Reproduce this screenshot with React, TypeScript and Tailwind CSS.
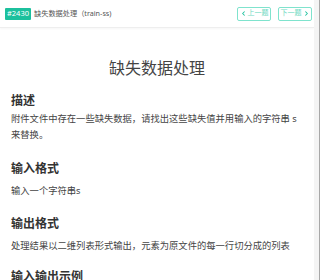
import { ChevronLeft, ChevronRight } from "lucide-react";

const font = { fontFamily: '"Noto Sans", "Noto Sans CJK SC", sans-serif' };

export default function App() {
  return (
    <div className="flex h-[280px] w-[320px] overflow-hidden bg-white" style={font}>
      <div className="flex min-w-0 flex-1 flex-col">
        {/* Header */}
        <div className="flex h-[28px] shrink-0 items-center justify-between border-b border-[#eeeeee] pl-[5px] pr-[2px] shadow-[0_1px_2px_rgba(0,0,0,0.04)]">
          <div className="flex items-center gap-[3px]">
            <span className="flex h-[12px] w-[26px] items-center justify-center rounded-[1px] bg-[#1cc09d] text-[7.5px] text-white">#2430</span>
            <span className="text-[7.2px] text-[#555]">缺失数据处理（train-ss)</span>
          </div>
          <div className="flex items-center gap-[7px]">
            <button className="flex h-[14px] w-[34px] items-center justify-center gap-[1px] rounded-[2px] border border-[#7fe3cd] text-[7px] text-[#6fd9c2]">
              <ChevronLeft className="h-[7px] w-[7px] text-[#1cc09d]" strokeWidth={3.5} />
              上一题
            </button>
            <button className="flex h-[14px] w-[34px] items-center justify-center gap-[1px] rounded-[2px] border border-[#7fe3cd] text-[7px] text-[#6fd9c2]">
              下一题
              <ChevronRight className="h-[7px] w-[7px] text-[#1cc09d]" strokeWidth={3.5} />
            </button>
          </div>
        </div>

        {/* Body */}
        <div className="flex-1 px-[11px] text-[#333]">
          <h1 className="mt-[30px] text-center text-[16px] font-normal leading-[20px] text-[#444]">缺失数据处理</h1>

          <h2 className="mt-[15px] text-[12px] font-bold leading-[16px]">描述</h2>
          <p className="mt-[2px] text-[9.3px] leading-[16px] text-[#444]">
            附件文件中存在一些缺失数据，请找出这些缺失值并用输入的字符串 s 来替换。
          </p>

          <h2 className="mt-[18px] text-[12px] font-bold leading-[16px]">输入格式</h2>
          <p className="mt-[6px] text-[9.3px] leading-[16px] text-[#444]">输入一个字符串s</p>

          <h2 className="mt-[17px] text-[12px] font-bold leading-[16px]">输出格式</h2>
          <p className="mt-[6px] text-[9.3px] leading-[16px] text-[#444]">
            处理结果以二维列表形式输出，元素为原文件的每一行切分成的列表
          </p>

          <h2 className="mt-[15px] text-[12px] font-bold leading-[16px]">输入输出示例</h2>
        </div>
      </div>

      {/* Scrollbar */}
      <div className="flex w-[6px] shrink-0">
        <div className="w-[5px] bg-[#f4f4f4]" />
        <div className="w-[1px] bg-[#a8a8a8]" />
      </div>
    </div>
  );
}
